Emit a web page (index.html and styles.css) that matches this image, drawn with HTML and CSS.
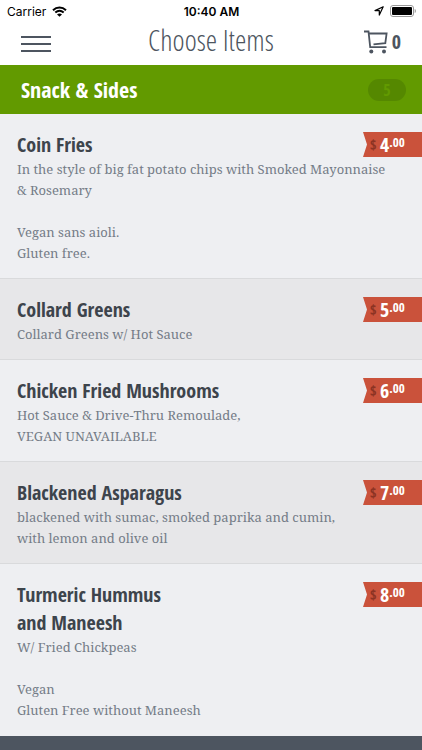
FILE: index.html
```html
<!DOCTYPE html>
<html lang="en">
<head>
    <meta charset="UTF-8">
    <meta name="viewport" content="width=device-width, initial-scale=1.0">
    <title>Choose Items</title>
    <link rel="stylesheet" href="styles.css">
</head>
<body>
    <div class="status-bar">
        <div class="status-side">
            <span>Carrier</span>
            <svg width="15" height="11" viewBox="0 0 15 11" fill="none" stroke="#000" stroke-width="2">
                <path d="M1 4.2C4.8.6 10.200.6 14 4.200"/>
                <path d="M3.300 6.600c2.500-2.200 5.900-2.200 8.400 0"/>
                <path d="M7.500 10.800L5 8.400c1.500-1.200 3.500-1.200 5 0z" fill="#000" stroke="none"/>
            </svg>
        </div>
        <span class="time">10:40 AM</span>
        <div class="status-side status-right">
            <svg width="10" height="10" viewBox="0 0 10 10" fill="none" stroke="#000" stroke-width="1.200" stroke-linejoin="round">
                <path d="M9.200.8L1 4.600h4.300v4.500z"/>
            </svg>
            <svg width="26" height="12" viewBox="0 0 26 12">
                <rect x=".5" y=".5" width="23" height="11" rx="2.500" fill="#fff" stroke="#999"/>
                <rect x="2" y="2" width="20" height="8" rx="1" fill="#000"/>
                <path d="M24.700 4v4c1.600-.6 1.600-3.400 0-4z" fill="#999"/>
            </svg>
        </div>
    </div>

    <header class="navbar">
        <button class="menu-btn" aria-label="Menu"><span></span><span></span><span></span></button>
        <h1>Choose Items</h1>
        <button class="cart-btn" aria-label="Cart, 0 items">
            <svg width="24" height="24" viewBox="0 0 24 24" fill="none" stroke="#4d5560" stroke-width="1.800">
                <path d="M0 1.500h4.500l1.700 15.700h16.300"/>
                <path d="M5 3.500h17.600l-1.300 9.700L9.500 14.300"/>
                <circle cx="7.300" cy="21.500" r="2" fill="#4d5560" stroke="none"/>
                <circle cx="20" cy="21.500" r="2" fill="#4d5560" stroke="none"/>
            </svg>
            <span>0</span>
        </button>
    </header>

    <main>
        <div class="category">
            <h2>Snack &amp; Sides</h2>
            <span class="count">5</span>
        </div>

        <ul class="items">
            <li class="item">
                <div class="item-head">
                    <h3>Coin Fries</h3>
                    <div class="price"><span class="currency">$</span><span class="dollars">4</span><span class="cents">.00</span></div>
                </div>
                <p>In the style of big fat potato chips with Smoked Mayonnaise<br>&amp; Rosemary<br><br>Vegan sans aioli.<br>Gluten free.</p>
            </li>
            <li class="item">
                <div class="item-head">
                    <h3>Collard Greens</h3>
                    <div class="price"><span class="currency">$</span><span class="dollars">5</span><span class="cents">.00</span></div>
                </div>
                <p>Collard Greens w/ Hot Sauce</p>
            </li>
            <li class="item">
                <div class="item-head">
                    <h3>Chicken Fried Mushrooms</h3>
                    <div class="price"><span class="currency">$</span><span class="dollars">6</span><span class="cents">.00</span></div>
                </div>
                <p>Hot Sauce &amp; Drive-Thru Remoulade,<br>VEGAN UNAVAILABLE</p>
            </li>
            <li class="item">
                <div class="item-head">
                    <h3>Blackened Asparagus</h3>
                    <div class="price"><span class="currency">$</span><span class="dollars">7</span><span class="cents">.00</span></div>
                </div>
                <p>blackened with sumac, smoked paprika and cumin,<br>with lemon and olive oil</p>
            </li>
            <li class="item">
                <div class="item-head">
                    <h3>Turmeric Hummus<br>and Maneesh</h3>
                    <div class="price"><span class="currency">$</span><span class="dollars">8</span><span class="cents">.00</span></div>
                </div>
                <p>W/ Fried Chickpeas<br><br>Vegan<br>Gluten Free without Maneesh</p>
            </li>
        </ul>
    </main>
    <footer></footer>
</body>
</html>
```

FILE: styles.css
```css
* {
    box-sizing: border-box;
    margin: 0;
    padding: 0;
}

body {
    display: flex;
    flex-direction: column;
    min-height: 100vh;
    background: #fff;
    color: #3d444c;
    font-family: "Open Sans Condensed", "Liberation Sans Narrow", "Liberation Sans", sans-serif;
    font-weight: 700;
}

button {
    border: none;
    background: none;
    color: #4d5560;
    font-family: inherit;
    cursor: pointer;
}

.status-bar {
    display: flex;
    align-items: center;
    padding: 0 6px 0 7px;
    height: 22px;
    color: #000;
    font-family: Inter, sans-serif;
    font-size: 12px;
    font-weight: 400;
}

.status-side {
    display: flex;
    flex: 1;
    align-items: center;
    gap: 6px;
}

.status-right {
    justify-content: flex-end;
}

.time {
    font-weight: 600;
}

.navbar {
    display: grid;
    grid-template-columns: 1fr auto 1fr;
    align-items: center;
    height: 43px;
    padding: 0 21px;
}

.navbar h1 {
    padding-bottom: 8px;
    color: #4d5560;
    font-family: "Open Sans Condensed Light", "Liberation Sans Narrow", sans-serif;
    font-size: 29px;
    font-weight: 400;
    line-height: 32px;
}

.menu-btn {
    display: flex;
    flex-direction: column;
    gap: 5px;
    width: 30px;
}

.menu-btn span {
    height: 2px;
    background: #4d5560;
}

.cart-btn {
    display: flex;
    align-items: center;
    justify-self: end;
    gap: 4px;
    padding-bottom: 4px;
    font-size: 20px;
    line-height: 24px;
}

.category {
    display: flex;
    align-items: center;
    justify-content: space-between;
    height: 49px;
    padding: 0 16px 0 21px;
    background: #629a00;
    color: #fff;
}

.category h2 {
    padding-bottom: 2px;
    font-size: 22px;
}

.count {
    width: 38px;
    border-radius: 11px;
    background: #558800;
    color: #629a00;
    font-size: 16px;
    line-height: 22px;
    text-align: center;
}

.items {
    list-style: none;
}

.item {
    padding: 17px 0 14px 17px;
    border-bottom: 1px solid #d9dadc;
    background: #eeeff2;
}

.item:nth-child(even) {
    background: #e7e7e9;
}

.item:last-child {
    border-bottom-color: #eeeff2;
}

.item-head {
    display: flex;
    align-items: flex-start;
    justify-content: space-between;
}

.item h3 {
    font-size: 20px;
    line-height: 28px;
}

.item p {
    color: #747c87;
    font-family: "Noto Serif", "Liberation Serif", serif;
    font-size: 13px;
    font-weight: 400;
    line-height: 21px;
}

.price {
    display: flex;
    width: 59px;
    height: 25px;
    margin-top: 1px;
    padding-left: 7px;
    background: #ca523b;
    clip-path: polygon(0 0, 100% 0, 100% 100%, 0 100%, 4px 50%);
    color: #fff;
    line-height: 25px;
}

.currency {
    width: 10px;
    color: #8c3323;
    font-size: 14px;
}

.dollars {
    font-size: 20px;
}

.cents {
    font-size: 13px;
    line-height: 20px;
}

footer {
    flex: 1;
    min-height: 14px;
    background: #4d5560;
}
```
